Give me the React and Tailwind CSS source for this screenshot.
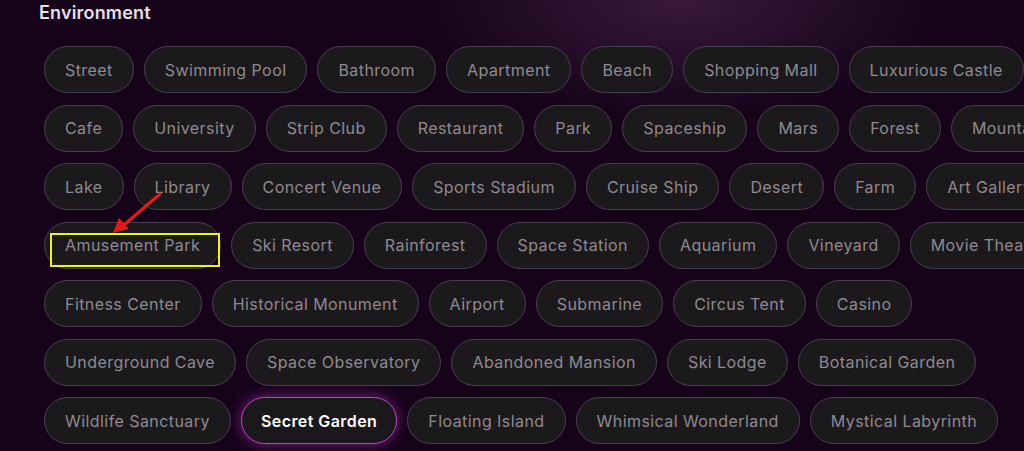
import React from "react";

const rows = [
  ["Street", "Swimming Pool", "Bathroom", "Apartment", "Beach", "Shopping Mall", "Luxurious Castle"],
  ["Cafe", "University", "Strip Club", "Restaurant", "Park", "Spaceship", "Mars", "Forest", "Mountains"],
  ["Lake", "Library", "Concert Venue", "Sports Stadium", "Cruise Ship", "Desert", "Farm", "Art Gallery"],
  ["Amusement Park", "Ski Resort", "Rainforest", "Space Station", "Aquarium", "Vineyard", "Movie Theater"],
  ["Fitness Center", "Historical Monument", "Airport", "Submarine", "Circus Tent", "Casino"],
  ["Underground Cave", "Space Observatory", "Abandoned Mansion", "Ski Lodge", "Botanical Garden"],
  ["Wildlife Sanctuary", "Secret Garden", "Floating Island", "Whimsical Wonderland", "Mystical Labyrinth"],
];

function Chip({ label }) {
  const active = label === "Secret Garden";
  if (active) {
    return (
      <div className="shrink-0 h-[47px] px-[19px] flex items-center rounded-full bg-[#1b181b] border-[1.5px] border-[#c33fc6] shadow-[0_0_14px_rgba(200,60,210,0.55)] text-white font-semibold text-[16px] whitespace-nowrap">
        {label}
      </div>
    );
  }
  return (
    <div className="shrink-0 h-[47px] px-[20px] flex items-center rounded-full bg-[#1c191c] border border-[#4d3d52] text-[#8e8a90] text-[16px] whitespace-nowrap">
      {label}
    </div>
  );
}

export default function App() {
  return (
    <div
      className="relative w-[1024px] h-[451px] overflow-hidden bg-[#16031a]"
      style={{ fontFamily: "Inter, 'Noto Sans', sans-serif" }}
    >
      <div className="absolute inset-0 bg-[radial-gradient(ellipse_260px_120px_at_680px_0px,rgba(120,70,120,0.35),transparent)]" />
      <div className="relative pl-[39px] pt-[3px]">
        <h2 className="text-[18px] font-semibold text-[#e8dfec] leading-[20px] tracking-[0.01em]">Environment</h2>
        <div className="mt-[23px] pl-[5px] flex flex-col gap-[11.5px]">
          {rows.map((r, i) => (
            <div key={i} className="flex gap-[10px] tracking-[0.027em]">
              {r.map((l) => (
                <Chip key={l} label={l} />
              ))}
            </div>
          ))}
        </div>
      </div>
      <div className="absolute left-[50px] top-[233px] w-[170px] h-[34px] border-2 border-[#eef02a]" />
      <svg className="absolute left-0 top-0" width="1024" height="451">
        <line x1="160" y1="194" x2="124" y2="225" stroke="#e01b1b" strokeWidth="3" strokeLinecap="round" />
        <polygon points="113,233 119,218 129,229" fill="#e01b1b" />
      </svg>
    </div>
  );
}
